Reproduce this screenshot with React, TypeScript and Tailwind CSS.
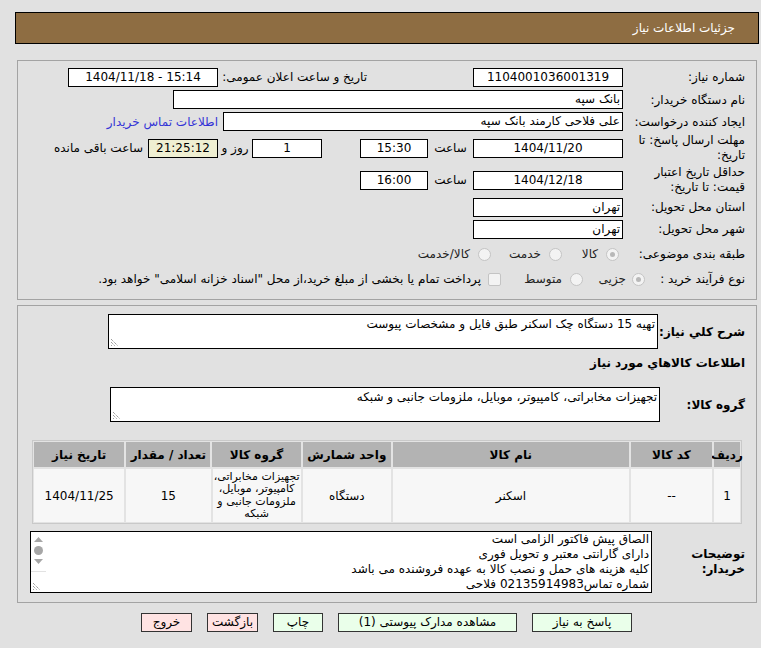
import type { ReactNode } from 'react'

/* Need details page — read-only form of a published tender */

function Box({ w, children, align = 'center', tint = false, ltr = false }: { w: string; children?: ReactNode; align?: 'center' | 'right'; tint?: boolean; ltr?: boolean }) {
  return (
    <div dir={ltr ? 'ltr' : undefined} className={`${w} h-[19px] border border-black leading-[17px] whitespace-nowrap overflow-hidden ${tint ? 'bg-[#efefd2]' : 'bg-white'} ${align === 'right' ? 'text-right pr-[2px]' : 'text-center'}`}>
      {children}
    </div>
  )
}

function Radio({ checked = false }: { checked?: boolean }) {
  return (
    <div className="w-[13px] h-[13px] rounded-full border border-[#c4c4c4] bg-[#f3f3f3] flex items-center justify-center shrink-0">
      {checked && <div className="w-[5px] h-[5px] rounded-full bg-[#b8b8b8]" />}
    </div>
  )
}

function Grip() {
  return (
    <svg className="absolute left-[1px] bottom-[1px]" width="10" height="10" viewBox="0 0 10 10">
      <path d="M1 2 L8 9 M1 5 L5 9 M1 8 L2 9" stroke="#777" strokeWidth="1" strokeDasharray="1 1" />
    </svg>
  )
}

function Area({ w, h, children, scroll = false }: { w: string; h: string; children?: ReactNode; scroll?: boolean }) {
  return (
    <div className={`relative ${w} ${h} border border-black bg-white flex overflow-hidden`}>
      <div className={`flex-1 text-right pr-[2px] leading-[15px] ${scroll ? 'pt-0' : 'pt-[2px]'}`}>{children}</div>
      {scroll && (
        <div className="w-[15px] h-full flex flex-col items-center pt-[4px] gap-[4px]">
          <svg width="9" height="6" viewBox="0 0 9 6"><path d="M0 6 L4.5 1 L9 6 Z" fill="#a6a6a6" /></svg>
          <div className="w-[9px] h-[9px] rounded-full bg-[#a6a6a6]" />
          <svg width="9" height="6" viewBox="0 0 9 6"><path d="M0 0 L4.5 5 L9 0 Z" fill="#a6a6a6" /></svg>
          <div className="w-[15px] border-t border-[#e2e2e2] mt-[2px]" />
        </div>
      )}
      <Grip />
    </div>
  )
}

const cols = [
  { h: 'ردیف', w: 'w-[26px]', v: ['1'] },
  { h: 'کد کالا', w: 'w-[82px]', v: ['--'] },
  { h: 'نام کالا', w: 'w-[238px]', v: ['اسکنر'] },
  { h: 'واحد شمارش', w: 'w-[89px]', v: ['دستگاه'] },
  { h: 'گروه کالا', w: 'w-[89px]', v: ['تجهیزات مخابراتی،', 'کامپیوتر، موبایل،', 'ملزومات جانبی و', 'شبکه'] },
  { h: 'تعداد / مقدار', w: 'w-[85px]', v: ['15'] },
  { h: 'تاریخ نیاز', w: 'w-[91px]', v: ['1404/11/25'] },
]

const notes = [
  'الصاق پیش فاکتور الزامی است',
  'دارای گارانتی معتبر و تحویل فوری',
  'کلیه هزینه های حمل و نصب کالا به عهده فروشنده می باشد',
  'شماره تماس02135914983 فلاحی',
]

export default function App() {
  return (
    <div dir="rtl" className="w-[761px] h-[648px] bg-[#e1e1e1] text-[12px] text-black font-['DejaVu_Sans',sans-serif] pt-[12px] overflow-hidden">
      {/* Header */}
      <div className="ml-[15px] mr-[2px] h-[32px] bg-[#8e6d42] border border-black text-white flex items-center pr-[23px]">
        جزئیات اطلاعات نیاز
      </div>

      {/* General info */}
      <div className="ml-[17px] mr-[4px] mt-[16px] h-[240px] border border-[#a3a3a3] pt-[5px]">
        <div className="flex items-center h-[22px]">
          <div className="w-[133px] pr-[11px]">شماره نیاز:</div>
          <Box w="w-[150px]">1104001036001319</Box>
          <div className="w-[105px]" />
          <div className="w-[150px] pr-[1px] whitespace-nowrap">تاریخ و ساعت اعلان عمومی:</div>
          <Box w="w-[150px]" ltr>1404/11/18 - 15:14</Box>
        </div>
        <div className="flex items-center h-[23px]">
          <div className="w-[133px] pr-[11px]">نام دستگاه خریدار:</div>
          <Box w="w-[450px]" align="right">بانک سپه</Box>
        </div>
        <div className="flex items-center h-[21px]">
          <div className="w-[133px] pr-[11px] whitespace-nowrap">ایجاد کننده درخواست:</div>
          <Box w="w-[400px]" align="right">علی فلاحی کارمند بانک سپه</Box>
          <div className="pr-[5px] text-[#3434d6] whitespace-nowrap">اطلاعات تماس خریدار</div>
        </div>
        <div className="flex items-center h-[32px]">
          <div className="w-[133px] pr-[11px] leading-[15px]">مهلت ارسال پاسخ: تا تاریخ:</div>
          <Box w="w-[150px]">1404/11/20</Box>
          <div className="w-[45px] text-center">ساعت</div>
          <Box w="w-[68px]">15:30</Box>
          <div className="w-[38px]" />
          <Box w="w-[70px]">1</Box>
          <div className="w-[34px] text-center">روز و</div>
          <Box w="w-[70px]" tint>21:25:12</Box>
          <div className="pr-[5px] whitespace-nowrap">ساعت باقی مانده</div>
        </div>
        <div className="flex items-center h-[32px]">
          <div className="w-[133px] pr-[11px] leading-[15px]">حداقل تاریخ اعتبار قیمت: تا تاریخ:</div>
          <Box w="w-[150px]">1404/12/18</Box>
          <div className="w-[45px] text-center">ساعت</div>
          <Box w="w-[68px]">16:00</Box>
        </div>
        <div className="flex items-center h-[22px]">
          <div className="w-[133px] pr-[11px]">استان محل تحویل:</div>
          <Box w="w-[150px]" align="right">تهران</Box>
        </div>
        <div className="flex items-center h-[22px]">
          <div className="w-[133px] pr-[11px]">شهر محل تحویل:</div>
          <Box w="w-[150px]" align="right">تهران</Box>
        </div>
        <div className="flex items-center h-[28px]">
          <div className="w-[137px] pr-[11px] whitespace-nowrap">طبقه بندی موضوعی:</div>
          <Radio checked />
          <div className="pr-[8px] w-[44px] text-[#222]">کالا</div>
          <Radio />
          <div className="pr-[8px] w-[58px] text-[#222]">خدمت</div>
          <Radio />
          <div className="pr-[8px] text-[#222] whitespace-nowrap">کالا/خدمت</div>
        </div>
        <div className="flex items-center h-[22px]">
          <div className="w-[111px] pr-[11px] whitespace-nowrap">نوع فرآیند خرید :</div>
          <Radio checked />
          <div className="pr-[6px] w-[49px] text-[#222]">جزیی</div>
          <Radio />
          <div className="pr-[8px] w-[69px] text-[#222]">متوسط</div>
          <div className="w-[13px] h-[13px] border border-[#c4c4c4] bg-[#f3f3f3] rounded-[2px] shrink-0" />
          <div className="pr-[7px] whitespace-nowrap">پرداخت تمام یا بخشی از مبلغ خرید،از محل "اسناد خزانه اسلامی" خواهد بود.</div>
        </div>
      </div>

      {/* Description and items */}
      <div className="ml-[17px] mr-[4px] mt-[5px] h-[298px] border border-[#a3a3a3] pt-[8px]">
        <div className="flex items-center">
          <div className="w-[98px] pr-[11px] font-bold whitespace-nowrap">شرح کلي نیاز:</div>
          <Area w="w-[550px]" h="h-[35px]">تهیه 15 دستگاه چک اسکنر طبق فایل و مشخصات پیوست</Area>
        </div>
        <div className="mt-[6px] h-[16px] pr-[11px] font-bold leading-[16px]">اطلاعات کالاهاي مورد نیاز</div>
        <div className="flex items-center mt-[16px]">
          <div className="w-[96px] pr-[11px] font-bold">گروه کالا:</div>
          <Area w="w-[550px]" h="h-[35px]">تجهیزات مخابراتی، کامپیوتر، موبایل، ملزومات جانبی و شبکه</Area>
        </div>

        <div className="mt-[18px] mr-[14px] w-[710px] border border-[#c9c9c9] bg-[#e3e3e3] p-[1px]">
          <div className="flex gap-[2px]">
            {cols.map(c => (
              <div key={c.h} className={`${c.w} h-[25px] bg-[#b3b3b3] font-bold flex items-center justify-center whitespace-nowrap`}>{c.h}</div>
            ))}
          </div>
          <div className="flex gap-[2px] mt-[2px]">
            {cols.map(c => (
              <div key={c.h} className={`${c.w} h-[53px] bg-[#f7f7f7] flex flex-col items-center justify-center text-center ${c.v.length > 1 ? 'text-[11px] leading-[12.5px]' : ''}`}>
                {c.v.map(line => <div key={line} className="whitespace-nowrap">{line}</div>)}
              </div>
            ))}
          </div>
        </div>

        <div className="flex items-center mt-[7px]">
          <div className="w-[104px] pr-[11px] font-bold leading-[15px]">توضیحات خریدار:</div>
          <Area w="w-[622px]" h="h-[62px]" scroll>
            {notes.map(n => <div key={n} className="whitespace-nowrap">{n}</div>)}
          </Area>
        </div>
      </div>

      {/* Actions */}
      <div className="mt-[10px] mr-[129px] flex gap-[15px]">
        <div className="w-[100px] h-[19px] border border-[#333] bg-[#eaffea] text-center leading-[17px]">پاسخ به نیاز</div>
        <div className="w-[179px] h-[19px] border border-[#333] bg-[#eaffea] text-center leading-[17px]">مشاهده مدارک پیوستی (1)</div>
        <div className="w-[50px] h-[19px] border border-[#333] bg-[#eaffea] text-center leading-[17px]">چاپ</div>
        <div className="w-[51px] h-[19px] border border-[#333] bg-[#ffe3e3] text-center leading-[17px]">بازگشت</div>
        <div className="w-[51px] h-[19px] border border-[#333] bg-[#ffe3e3] text-center leading-[17px]">خروج</div>
      </div>
    </div>
  )
}
